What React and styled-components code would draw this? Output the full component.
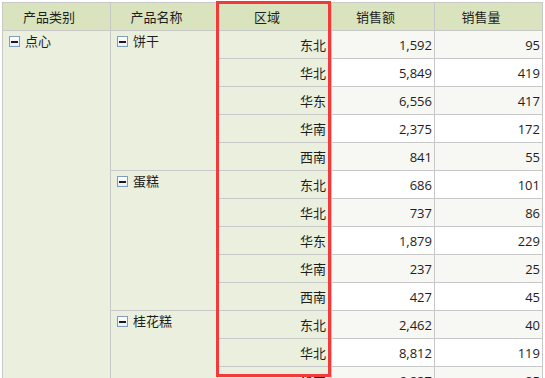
import React from "react";
import styled, { createGlobalStyle } from "styled-components";

const GlobalStyle = createGlobalStyle`
  html, body {
    margin: 0;
    padding: 0;
    background: #ffffff;
    overflow: hidden;
  }
  body {
    font-family: "Open Sans", "Noto Sans CJK SC", sans-serif;
    font-size: 13px;
    color: #1e1e1e;
  }
`

const Page = styled.div`
  position: relative;
  padding: 2px 0 0 2px;
  width: 545px;
  height: 378px;
  box-sizing: border-box;
`

const Grid = styled.div`
  display: grid;
  grid-template-columns: 108px 107px 114px 103px 108px;
  grid-auto-rows: 28px;
  width: max-content;
  border-top: 1px solid #c8c8c8;
  border-left: 1px solid #c8c8c8;
`

const Cell = styled.div`
  box-sizing: border-box;
  border-right: 1px solid #c8c8c8;
  border-bottom: 1px solid #c8c8c8;
  display: flex;
  align-items: center;
  white-space: nowrap;
  overflow: hidden;
`

const HeadCell = styled(Cell)`
  background: #d9e4be;
  justify-content: center;
  padding-right: 15px;
`

const TreeCell = styled(Cell)`
  grid-row: span ${p => p.$span};
  background: #ebf0de;
  align-items: flex-start;
  padding: 5px 6px 0 6px;
`

const TreeLabel = styled.div`
  display: flex;
  align-items: center;
  gap: 5px;
  line-height: 11px;
  height: 11px;
`

const Toggle = styled.span`
  box-sizing: border-box;
  width: 11px;
  height: 11px;
  border: 1px solid #7f9cc0;
  background: linear-gradient(#ffffff, #e8eef6);
  display: flex;
  align-items: center;
  justify-content: center;

  &::after {
    content: "";
    width: 7px;
    height: 2px;
    background: #1a1a1a;
  }
`

const RegionCell = styled(Cell)`
  background: #ebf0de;
  justify-content: flex-end;
  padding-right: 5px;
`

const NumCell = styled(Cell)`
  background: ${p => (p.$odd ? "#f7f7f3" : "#ffffff")};
  justify-content: flex-end;
  padding-right: 2px;
`

const Highlight = styled.div`
  position: absolute;
  left: 216px;
  top: 1px;
  width: 115px;
  height: 376px;
  box-sizing: border-box;
  border: 3px solid #f23a3a;
  pointer-events: none;
`

const headers = ["产品类别", "产品名称", "区域", "销售额", "销售量"];

const groups = [
  {
    name: "饼干",
    rows: [
      ["东北", "1,592", "95"],
      ["华北", "5,849", "419"],
      ["华东", "6,556", "417"],
      ["华南", "2,375", "172"],
      ["西南", "841", "55"],
    ],
  },
  {
    name: "蛋糕",
    rows: [
      ["东北", "686", "101"],
      ["华北", "737", "86"],
      ["华东", "1,879", "229"],
      ["华南", "237", "25"],
      ["西南", "427", "45"],
    ],
  },
  {
    name: "桂花糕",
    rows: [
      ["东北", "2,462", "40"],
      ["华北", "8,812", "119"],
      ["华东", "6,827", "85"],
      ["华南", "3,114", "64"],
      ["西南", "1,206", "38"],
    ],
  },
];

const total = groups.reduce((n, g) => n + g.rows.length, 0);

const App = () => {
  let index = 0;

  return (
    <Page>
      <GlobalStyle />
      <Grid>
        {headers.map(h => (
          <HeadCell key={h}>{h}</HeadCell>
        ))}
        {groups.map((group, gi) =>
          group.rows.map((row, ri) => {
            const odd = index % 2 === 0;
            index += 1;
            return (
              <React.Fragment key={group.name + row[0]}>
                {gi === 0 && ri === 0 ? (
                  <TreeCell $span={total}>
                    <TreeLabel>
                      <Toggle />
                      点心
                    </TreeLabel>
                  </TreeCell>
                ) : null}
                {ri === 0 ? (
                  <TreeCell $span={group.rows.length}>
                    <TreeLabel>
                      <Toggle />
                      {group.name}
                    </TreeLabel>
                  </TreeCell>
                ) : null}
                <RegionCell>{row[0]}</RegionCell>
                <NumCell $odd={odd}>{row[1]}</NumCell>
                <NumCell $odd={odd}>{row[2]}</NumCell>
              </React.Fragment>
            );
          })
        )}
      </Grid>
      <Highlight />
    </Page>
  );
};

export default App;
